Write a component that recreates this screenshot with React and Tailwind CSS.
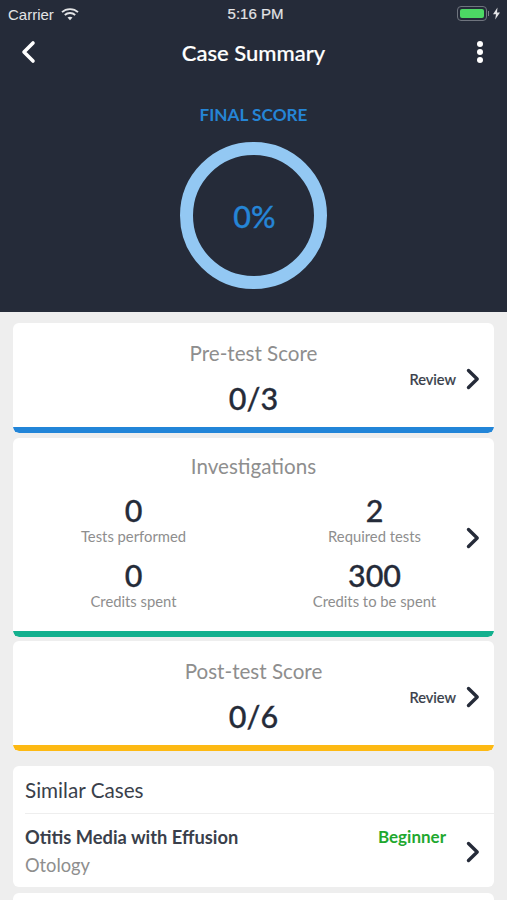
import React from "react";

const Chevron = ({ className = "" }) => (
  <svg width="14" height="22" viewBox="0 0 14 22" fill="none" className={className}>
    <path d="M2.5 2.5 L11.2 11 L2.5 19.5" stroke="#252b39" strokeWidth="3.4" strokeLinecap="round" strokeLinejoin="round" />
  </svg>
);

const ScoreCard = ({ title, score, bar }) => (
  <div className="relative h-[110px] bg-white rounded-md overflow-hidden flex flex-col items-center">
    <div className="mt-[15px] h-[30px] leading-[30px] text-[20.6px] text-[#8e8e8e]">{title}</div>
    <div className="mt-[12px] h-[36px] leading-[36px] text-[30.5px] font-medium [-webkit-text-stroke:0.3px_#252b39] text-[#252b39]">{score}</div>
    <div className="absolute right-[14px] top-[45px] flex items-center">
      <span className="relative top-[1px] text-[14.6px] font-medium [-webkit-text-stroke:0.2px_#3a3f4b] text-[#3a3f4b] mr-[10px]">Review</span>
      <Chevron />
    </div>
    <div className={`absolute left-0 right-0 bottom-0 h-[6px] rounded-b-md ${bar}`} />
  </div>
);

const Stat = ({ value, label }) => (
  <div className="flex flex-col items-center">
    <div className="h-[34px] leading-[34px] text-[30.5px] font-medium [-webkit-text-stroke:0.3px_#252b39] text-[#252b39]">{value}</div>
    <div className="h-[19px] leading-[19px] text-[14.8px] text-[#8e8e8e]">{label}</div>
  </div>
);

export default function App() {
  return (
    <div className="w-[507px] h-[900px] overflow-hidden bg-[#eeeeee] font-['Lato','Noto_Sans',sans-serif]">
      <div className="h-[312px] bg-[#252b39] flex flex-col items-center">
        <div className="w-full h-[27px] relative flex items-center justify-center font-['Liberation_Sans',sans-serif] text-[15px] text-[#e3e4e6]">
          <div className="absolute left-[8px] top-[5px] flex items-center gap-[7px]">
            <span className="relative top-[-1px]">Carrier</span>
            <svg width="18" height="13" viewBox="0 0 18 13" className="relative top-[-2px]">
              <path d="M1 4.2 C5.3 0 12.7 0 17 4.2" stroke="#e3e4e6" strokeWidth="1.8" fill="none" />
              <path d="M3.8 7 C6.6 4.3 11.4 4.3 14.2 7" stroke="#e3e4e6" strokeWidth="1.8" fill="none" />
              <path d="M6.5 9.6 C8 8.4 10 8.4 11.5 9.6 L9 12.3 Z" fill="#e3e4e6" />
            </svg>
          </div>
          <span className="relative top-[1px] left-[2px] [-webkit-text-stroke:0.2px_#e3e4e6]">5:16 PM</span>
          <div className="absolute right-[6px] top-[6px] flex items-center">
            <div className="w-[30px] h-[15px] rounded-[4px] border border-[#6f747e] p-[2px]">
              <div className="w-full h-full rounded-[2px] bg-[#4cd964]" />
            </div>
            <div className="w-[1px] h-[5px] bg-[#7b7f88] ml-[1px]" />
            <svg width="9" height="13" viewBox="0 0 9 13" className="ml-[3px]">
              <path d="M5.5 0.5 L1 7.2 H4 L3.2 12.5 L8 5.5 H5 Z" fill="#e3e4e6" />
            </svg>
          </div>
        </div>
        <div className="w-full h-[54px] relative flex items-center justify-center">
          <svg width="16" height="24" viewBox="0 0 16 24" className="absolute left-[20px] top-[13px]">
            <path d="M13 3 L4 12 L13 21" stroke="#ffffff" strokeWidth="3.6" fill="none" strokeLinecap="round" strokeLinejoin="round" />
          </svg>
          <span className="relative top-[-2px] text-[22px] font-medium [-webkit-text-stroke:0.2px_#ffffff] text-white">Case Summary</span>
          <div className="absolute right-[24px] top-[14px] flex flex-col gap-[2px]">
            <div className="w-[6px] h-[6px] rounded-full bg-white" />
            <div className="w-[6px] h-[6px] rounded-full bg-white" />
            <div className="w-[6px] h-[6px] rounded-full bg-white" />
          </div>
        </div>
        <div className="mt-[22px] h-[24px] leading-[24px] text-[17.2px] font-bold text-[#2585d6]">FINAL SCORE</div>
        <div className="mt-[15px] w-[147px] h-[147px] rounded-full border-[13px] border-[#93c8f3] flex items-center justify-center">
          <span className="relative top-[1px] left-[1px] text-[30.5px] font-medium [-webkit-text-stroke:0.3px_#2585d6] text-[#2585d6]">0%</span>
        </div>
      </div>

      <div className="px-[13px] pt-[11px] flex flex-col">
        <ScoreCard title="Pre-test Score" score="0/3" bar="bg-[#2285d8]" />

        <div className="relative mt-[5px] h-[199px] bg-white rounded-md overflow-hidden">
          <div className="mt-[13px] h-[30px] leading-[30px] text-center text-[20.6px] text-[#8e8e8e]">Investigations</div>
          <div className="mt-[12px] w-[482px] grid grid-cols-2 gap-y-[12px]">
            <Stat value="0" label="Tests performed" />
            <Stat value="2" label="Required tests" />
            <Stat value="0" label="Credits spent" />
            <Stat value="300" label="Credits to be spent" />
          </div>
          <Chevron className="absolute right-[14px] top-[89px]" />
          <div className="absolute left-0 right-0 bottom-0 h-[6px] rounded-b-md bg-[#13b08e]" />
        </div>

        <div className="mt-[4px]">
          <ScoreCard title="Post-test Score" score="0/6" bar="bg-[#fdb913]" />
        </div>

        <div className="relative mt-[15px] h-[121px] bg-white rounded-md">
          <div className="ml-[12px] h-[48px] leading-[48px] text-[20.7px] text-[#3a3f4b] border-b border-[#eeeeee]">Similar Cases</div>
          <div className="relative pl-[12px] pr-[48px]">
            <div className="flex justify-between mt-[11px] h-[24px] leading-[24px]">
              <span className="text-[18.3px] font-bold text-[#3a3f4b]">Otitis Media with Effusion</span>
              <span className="text-[17px] font-bold text-[#1fa82f]">Beginner</span>
            </div>
            <div className="mt-[4px] h-[24px] leading-[24px] text-[18.3px] text-[#8e8e8e]">Otology</div>
            <Chevron className="absolute right-[14px] top-[16px]" />
          </div>
        </div>

        <div className="mt-[6px] h-[40px] bg-white rounded-md" />
      </div>
    </div>
  );
}
